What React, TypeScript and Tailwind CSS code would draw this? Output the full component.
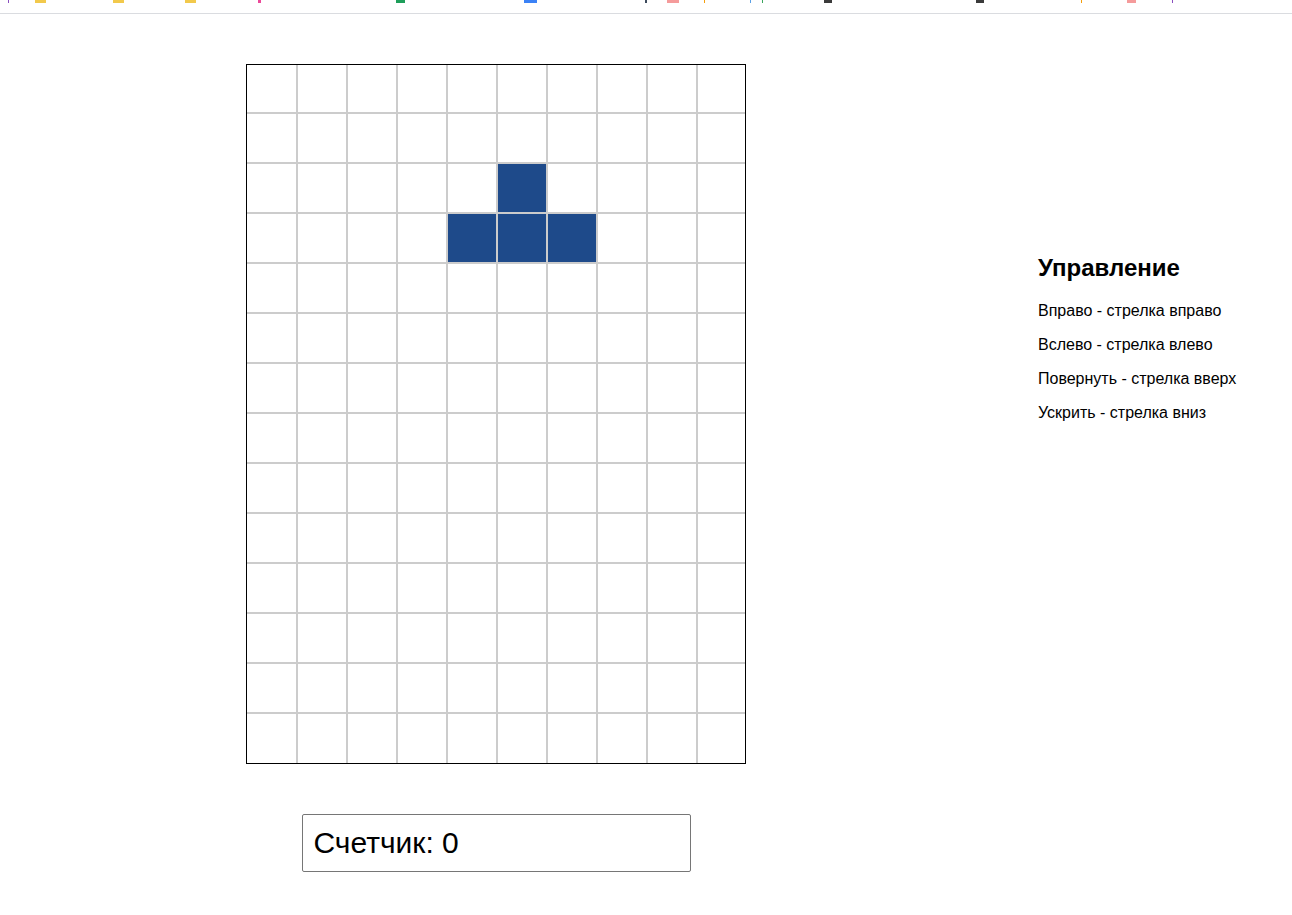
import React from "react";

const COLS = 10;
const ROWS = 14;

// cells occupied by the falling piece: [row, col]
const piece: [number, number][] = [
  [2, 5],
  [3, 4],
  [3, 5],
  [3, 6],
];

// cropped bookmark-bar icons peeking in at the very top
const marks: { left: number; width: number; color: string }[] = [
  { left: 8, width: 1, color: "#8a4fbf" },
  { left: 35, width: 11, color: "#f2c94c" },
  { left: 113, width: 11, color: "#f2c94c" },
  { left: 185, width: 11, color: "#f2c94c" },
  { left: 258, width: 3, color: "#ec4899" },
  { left: 396, width: 9, color: "#1e9e5a" },
  { left: 524, width: 13, color: "#3b82f6" },
  { left: 645, width: 2, color: "#3d4a5c" },
  { left: 667, width: 12, color: "#f59b9b" },
  { left: 704, width: 1, color: "#f59e0b" },
  { left: 750, width: 1, color: "#5aa0e6" },
  { left: 762, width: 1, color: "#3aa55d" },
  { left: 824, width: 8, color: "#3b3b3b" },
  { left: 976, width: 8, color: "#3b3b3b" },
  { left: 1081, width: 1, color: "#f59e0b" },
  { left: 1127, width: 9, color: "#f59b9b" },
  { left: 1172, width: 1, color: "#8a4fbf" },
];

function isFilled(r: number, c: number) {
  return piece.some(([pr, pc]) => pr === r && pc === c);
}

function Board() {
  const cells = [];
  for (let r = 0; r < ROWS; r++) {
    for (let c = 0; c < COLS; c++) {
      cells.push(
        <div
          key={`${r}-${c}`}
          className={isFilled(r, c) ? "bg-[#1e4a8a]" : "bg-white"}
        />,
      );
    }
  }
  return (
    <div className="box-border h-[700px] w-[500px] overflow-hidden border border-black bg-white">
      <div className="grid h-full w-full grid-cols-[49px_repeat(8,48px)_47px] grid-rows-[47px_repeat(12,48px)_49px] gap-[2px] bg-[#cccccc]">
        {cells}
      </div>
    </div>
  );
}

export default function App() {
  return (
    <div
      className="min-h-[915px] bg-white text-black"
      style={{ fontFamily: '"Liberation Sans", Arial, sans-serif' }}
    >
      <div className="relative h-[14px] border-b border-[#dadce0]">
        {marks.map((m) => (
          <span
            key={m.left}
            className="absolute top-0 h-[3px]"
            style={{ left: m.left, width: m.width, background: m.color }}
          />
        ))}
      </div>

      <div className="flex pl-[246px] pt-[50px]">
        <div className="flex flex-col items-center">
          <Board />
          <div className="mt-[50px] box-border flex h-[58px] w-[389px] items-center rounded-[2px] border border-[#767676] px-[11px] pb-[2px] text-[30px]">
            Счетчик: 0
          </div>
        </div>

        <div className="ml-[292px] pt-[190px]">
          <h2 className="text-[24px] font-bold leading-[28px]">Управление</h2>
          <div className="mt-[20px] flex flex-col gap-[16px] text-[16px] leading-[18px]">
            <p>Вправо - стрелка вправо</p>
            <p>Вслево - стрелка влево</p>
            <p>Повернуть - стрелка вверх</p>
            <p>Ускрить - стрелка вниз</p>
          </div>
        </div>
      </div>
    </div>
  );
}
